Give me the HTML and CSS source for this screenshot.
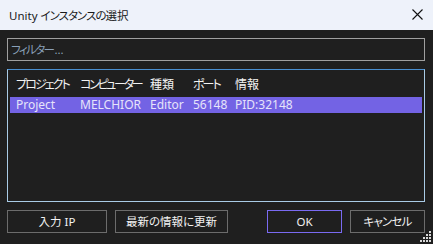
FILE: index.html
```html
<!DOCTYPE html>
<html lang="ja">
<head>
<meta charset="utf-8">
<link rel="stylesheet" href="styles.css">
</head>
<body>
<div class="window">
  <div class="titlebar">
    <span class="title">Unity <span class="kana">インスタンスの</span>選択</span>
    <svg class="close" width="11" height="11" viewBox="0 0 11 11"><path d="M0.5 0.5 L10.5 10.5 M10.5 0.5 L0.5 10.5" stroke="#111" stroke-width="1.1" fill="none"/></svg>
  </div>
  <div class="content">
    <div class="filter"><span class="ph">フィルター</span>...</div>
    <div class="list">
      <div class="row head">
        <span class="kana">プロジェクト</span><span class="kana wide">コンピューター</span><span>種類</span><span class="kana">ポート</span><span>情報</span>
      </div>
      <div class="row sel">
        <span>Project</span><span>MELCHIOR</span><span>Editor</span><span>56148</span><span>PID:32148</span>
      </div>
    </div>
    <div class="buttons">
      <div class="btn w100">入力 IP</div>
      <div class="btn w113">最新の情報に更新</div>
      <div class="spacer"></div>
      <div class="btn ok">OK</div>
      <div class="btn"><span class="kana-s">キャンセル</span></div>
    </div>
  </div>
  <svg class="grip" width="12" height="12" viewBox="0 0 12 12" fill="#d8d8d8">
    <rect x="9" y="0" width="2" height="2"/>
    <rect x="6" y="3" width="2" height="2"/><rect x="9" y="3" width="2" height="2"/>
    <rect x="3" y="6" width="2" height="2"/><rect x="6" y="6" width="2" height="2"/><rect x="9" y="6" width="2" height="2"/>
    <rect x="0" y="9" width="2" height="2"/><rect x="3" y="9" width="2" height="2"/><rect x="6" y="9" width="2" height="2"/><rect x="9" y="9" width="2" height="2"/>
  </svg>
</div>
</body>
</html>
```
FILE: styles.css
```css
* { box-sizing: border-box; }
html, body { margin: 0; padding: 0; background: #1f1f1f; }
body {
  width: 433px; height: 244px; overflow: hidden;
  font-family: "Noto Sans", "Noto Sans CJK JP", sans-serif;
  font-size: 12px;
  font-feature-settings: "palt" 1;
  white-space: nowrap;
}
.window { position: relative; width: 433px; height: 244px; background: #1f1f1f; }
.titlebar {
  height: 30px; background: #eef2fa; color: #1a1a1a;
  display: flex; align-items: center; justify-content: space-between;
  padding: 0 10px 1px 9px; font-size: 11.5px;
}
.title .kana { letter-spacing: -1px; }
.content { padding: 8px 8px 0 7px; display: flex; flex-direction: column; gap: 8px; }
.filter {
  height: 23px; border: 1px solid #a0a0a0; color: #8aa0b8;
  padding: 0 3px; display: flex; align-items: center; line-height: 1;
  font-size: 11.5px;
}
.filter .ph { letter-spacing: -1.6px; margin-right: 1px; }
.list {
  height: 133px; border: 1px solid #a9cbe6; border-top-color: #4a8fd0;
  padding: 0 2px;
}
.row {
  display: grid; grid-template-columns: 64px 70px 43px 42px 1fr;
  padding-left: 6px; align-items: center; line-height: 1;
}
.row.head { height: 27px; color: #f2f2f2; padding-top: 2px; }
.row.head .kana { letter-spacing: -1.9px; }
.row.head .kana.wide { letter-spacing: -2.3px; }
.row.sel { height: 16px; background: #7363e4; color: #e6e4fa; }
.buttons { display: flex; gap: 8px; height: 23px; }
.spacer { flex: 1; }
.btn {
  width: 75px; height: 23px; border: 1px solid #6c6c6c; color: #f2f2f2;
  display: flex; align-items: center; justify-content: center; line-height: 1;
  font-size: 11.5px;
}
.kana-s { letter-spacing: -0.8px; }
.btn.w100 { width: 100px; }
.btn.w113 { width: 113px; }
.btn.ok { border-color: #7a6af2; }
.grip { position: absolute; right: 1px; bottom: 1px; }
```
